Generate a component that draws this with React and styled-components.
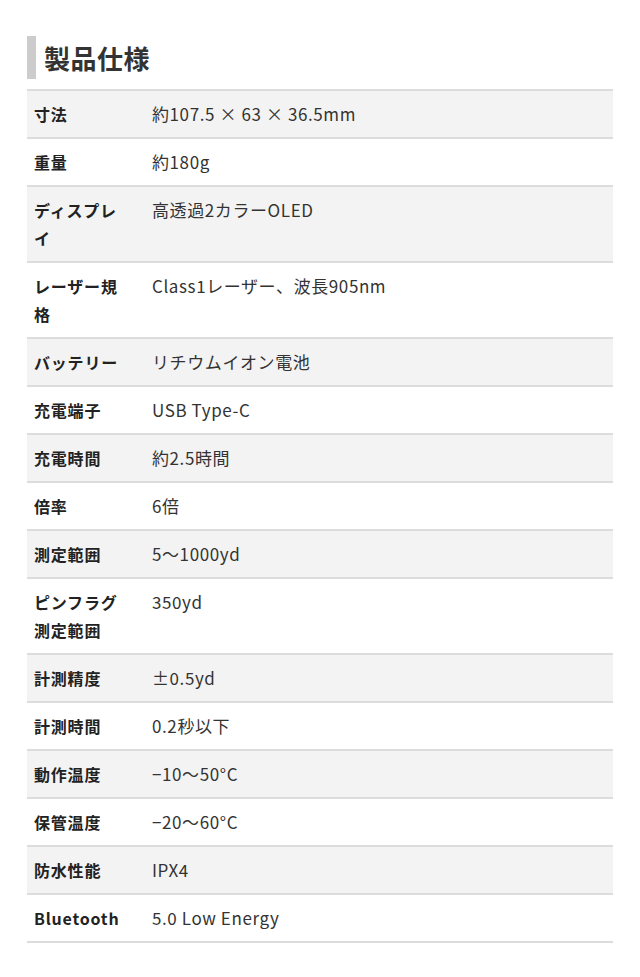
import React from "react";
import styled, { createGlobalStyle } from "styled-components";

const Global = createGlobalStyle`
  html, body { margin: 0; padding: 0; background: #fff; }
  body { font-family: "Noto Sans CJK JP", "Noto Sans", sans-serif; }
`;

const Page = styled.div`
  padding: 36px 27px 30px;
`;

const Heading = styled.h2`
  margin: 0 0 10px;
  border-left: 9px solid #cccccc;
  padding-left: 8px;
  font-size: 26px;
  line-height: 43px;
  font-weight: 700;
  color: #333;
  letter-spacing: 0.02em;
`;

const Table = styled.div`
  border-top: 2px solid #dcdcdc;
`;

const Row = styled.div`
  display: grid;
  grid-template-columns: 117px 1fr;
  background: ${(p) => (p.$shaded ? "#f3f3f3" : "#ffffff")};
  border-bottom: 2px solid #dcdcdc;
`;

const Label = styled.div`
  padding: 9px 12px 9px 7px;
  font-size: 16px;
  line-height: 28px;
  font-weight: 700;
  color: #222;
  letter-spacing: 0.05em;
`;

const Value = styled.div`
  padding: 9px 8px;
  font-size: 17px;
  line-height: 28px;
  font-weight: 400;
  color: #333;
  letter-spacing: 0.035em;
`;

const specs = [
  ["寸法", "約107.5 × 63 × 36.5mm"],
  ["重量", "約180g"],
  ["ディスプレイ", "高透過2カラーOLED"],
  ["レーザー規格", "Class1レーザー、波長905nm"],
  ["バッテリー", "リチウムイオン電池"],
  ["充電端子", "USB Type-C"],
  ["充電時間", "約2.5時間"],
  ["倍率", "6倍"],
  ["測定範囲", "5〜1000yd"],
  ["ピンフラグ測定範囲", "350yd"],
  ["計測精度", "±0.5yd"],
  ["計測時間", "0.2秒以下"],
  ["動作温度", "−10〜50°C"],
  ["保管温度", "−20〜60°C"],
  ["防水性能", "IPX4"],
  ["Bluetooth", "5.0 Low Energy"],
];

export default function App() {
  return (
    <Page>
      <Global />
      <Heading>製品仕様</Heading>
      <Table>
        {specs.map(([k, v], i) => (
          <Row key={k} $shaded={i % 2 === 0}>
            <Label>{k}</Label>
            <Value>{v}</Value>
          </Row>
        ))}
      </Table>
    </Page>
  );
}
